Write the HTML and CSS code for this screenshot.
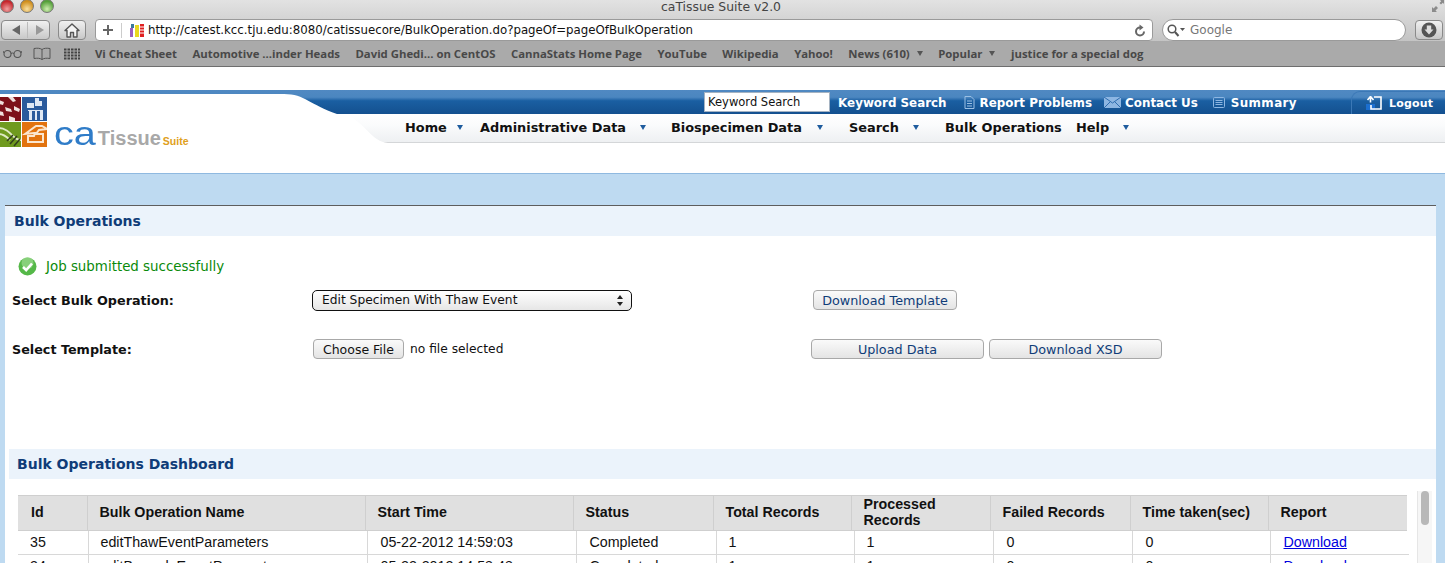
FILE: index.html
```html
<!DOCTYPE html>
<html lang="en">
<head>
<meta charset="utf-8"/>
<title>caTissue Suite v2.0</title>
<link rel="stylesheet" href="styles.css">
</head>
<body>
<div id="browser">
    <div id="titlebar">
        <div class="lights"><i class="light red"></i><i class="light amber"></i><i class="light green"></i></div>
        <div class="wintitle">caTissue Suite v2.0</div>
        <svg class="resize" width="12" height="12" viewBox="0 0 12 12"><path d="M0 12V7l1.500 1.500L4 6l2 2-2.500 2.500L5 12zM12 0v4l-1.200-1.200L9 4.500 7.500 3l1.700-1.800L8 0z" fill="#8b8b8b"/></svg>
    </div>
    <div id="toolbar">
        <div class="btn backfwd">
            <svg width="45" height="20" viewBox="0 0 45 20"><path d="M9 10l8-5v10z" fill="#666"/><path d="M33 5l8 5-8 5z" fill="#999"/><path d="M24.500 2v16" stroke="#bbb"/></svg>
        </div>
        <div class="btn home">
            <svg width="16" height="15" viewBox="0 0 16 15"><path d="M8 1L1 7.500h2V14h3.500V9.500h3V14H13V7.500h2z" fill="#f4f4f4" stroke="#555" stroke-width="1.400" stroke-linejoin="round"/></svg>
        </div>
        <div class="urlbar">
            <svg class="plus" width="12" height="12" viewBox="0 0 12 12"><path d="M6 1v10M1 6h10" stroke="#666" stroke-width="2"/></svg>
            <span class="sep"></span>
            <svg class="favicon" width="15" height="15" viewBox="0 0 15 15"><rect y="5" width="3" height="9" fill="#9a5fc0"/><rect x="1" y="1" width="3" height="4" fill="#3a7a9a"/><rect x="5" y="2" width="4" height="12" fill="#e8d820"/><rect x="10" y="1" width="4" height="13" fill="#e02020"/><path d="M10 4h4M10 7h4M10 10h4" stroke="#fff"/></svg>
            <span class="url">http://catest.kcc.tju.edu:8080/catissuecore/BulkOperation.do?pageOf=pageOfBulkOperation</span>
            <svg class="reload" width="12" height="13" viewBox="0 0 12 13"><path d="M10 7.500A4 4 0 1 1 6 3.500" fill="none" stroke="#666" stroke-width="2"/><path d="M5.500 0.500l4 3-4 3z" fill="#666"/></svg>
        </div>
        <div class="searchbar">
            <svg width="18" height="13" viewBox="0 0 18 13"><circle cx="5" cy="5" r="3.800" fill="none" stroke="#555" stroke-width="1.500"/><path d="M8 8l3.500 4" stroke="#555" stroke-width="2"/><path d="M13 4h5l-2.500 3z" fill="#555"/></svg>
            <span>Google</span>
        </div>
        <div class="btn dl">
            <svg width="16" height="16" viewBox="0 0 16 16"><circle cx="8" cy="8" r="7.500" fill="#555"/><path d="M5.800 3.500h4.400v4h2.300L8 12.500 3.500 7.500h2.300z" fill="#ddd"/></svg>
        </div>
    </div>
    <div id="bookmarks">
        <svg class="glasses" width="19" height="9" viewBox="0 0 19 9"><circle cx="4.500" cy="5" r="3.500" fill="none" stroke="#555" stroke-width="1.100"/><circle cx="14.500" cy="5" r="3.500" fill="none" stroke="#555" stroke-width="1.100"/><path d="M8 4.500q1.500-1 3 0M1 4L0 2M18 4l1-2" fill="none" stroke="#555"/></svg>
        <svg class="book" width="18" height="13" viewBox="0 0 18 13"><path d="M9 2.500C7 1 4 1 1 1.500v10c3-.5 6-.5 8 1 2-1.500 5-1.500 8-1v-10C14 1 11 1 9 2.500zM9 2.500v10" fill="none" stroke="#555"/></svg>
        <svg class="grid" width="16" height="12" viewBox="0 0 16 12"><path d="M0 1.500h16M0 4.500h16M0 7.500h16M0 10.500h16" stroke="#444" stroke-width="2" stroke-dasharray="2.500 1"/></svg>
        <a>Vi Cheat Sheet</a>
        <a>Automotive ...inder Heads</a>
        <a>David Ghedi... on CentOS</a>
        <a>CannaStats Home Page</a>
        <a>YouTube</a>
        <a>Wikipedia</a>
        <a>Yahoo!</a>
        <a>News (610)<i class="menuarrow"></i></a>
        <a>Popular<i class="menuarrow"></i></a>
        <a>justice for a special dog</a>
    </div>
</div>

<div id="gap"></div>

<div id="sitehead">
    <svg class="headcurve" width="400" height="54" viewBox="0 0 400 54">
        <path d="M0 4H284C305 4 310 15 337 24H346C365 33 372 52 388 53H0z" fill="#fff"/>
    </svg>
    <div class="logo">
        <svg width="48" height="50" viewBox="0 0 48 50">
            <rect width="22" height="24" fill="#7c1018"/>
            <path d="M0 3l5 2-1 3-4-1zM9 0h5l3 4-3 1zM6 10l6 2 1 3-6-1zM15 9l6 3-1 3-5-2zM0 14l4 1 1 4-5-1zM10 19l6 2v3h-6z" fill="#efe0dc"/>
            <rect x="23" width="25" height="24" fill="#2a5a9c"/>
            <path d="M28 6h7v5h-7zM36 1h4v3h3v5h-7zM29 13h15v1h-15zM30 14h3v9h-3zM36 14h2v9h-2zM41 14h3v9h-3z" fill="#dfe8f4"/>
            <rect y="25" width="22" height="25" fill="#6f9a1e"/>
            <path d="M0 31c6 0 10 4 14 8s6 4 8 4M0 37c5 0 8 3 11 6" fill="none" stroke="#dfeac4" stroke-width="1.800"/>
            <path d="M11 47l7-8M15 49l6-7M8 44l6-6" stroke="#33401c" stroke-width="1.600"/>
            <rect x="23" y="25" width="25" height="25" fill="#e2730f"/>
            <path d="M26 37l11-8 6 0 5 3-8 1-3 4h7v8H29v-6h6l1-3z" fill="none" stroke="#fbe6cf" stroke-width="2"/>
        </svg>
        <div class="logotext"><span class="lg-ca">ca</span><span class="lg-tissue">Tissue</span><span class="lg-suite">Suite</span></div>
    </div>
    <div class="headright">
        <div class="topbar">
            <div class="kwbox">Keyword Search</div>
            <a class="toplink kwlink">Keyword Search</a>
            <a class="toplink rplink">
                <svg width="11" height="13" viewBox="0 0 11 13"><path d="M1 .5h6l3 3v9H1zM3 5h5M3 7.500h5M3 10h5" fill="none" stroke="#9cc0e4"/></svg>
                Report Problems</a>
            <a class="toplink ctlink">
                <svg width="17" height="11" viewBox="0 0 17 11"><rect width="17" height="11" fill="#8db6e2"/><path d="M0 0l8.500 6L17 0M0 11l6-6M17 11l-6-6" fill="none" stroke="#2e6cae"/></svg>
                Contact Us</a>
            <a class="toplink smlink">
                <svg width="12" height="11" viewBox="0 0 12 11"><path d="M1.500.5h9a1 1 0 0 1 1 1v8a1 1 0 0 1-1 1h-9a1 1 0 0 1-1-1v-8a1 1 0 0 1 1-1zM2.500 3.500h7M2.500 5.500h7M2.500 7.500h7" fill="none" stroke="#8db6e2"/></svg>
                Summary</a>
            <a class="logout">
                <svg width="16" height="14" viewBox="0 0 16 14"><rect y="8" width="9" height="6" fill="#1c6fd0"/><path d="M8 1h7v12H5V9" fill="none" stroke="#fff" stroke-width="1.600"/><path d="M4.500 1v5.500M1.500 4l3-3.500 3 3.500" fill="none" stroke="#fff" stroke-width="1.600"/></svg>
                Logout</a>
        </div>
        <div class="navbar">
            <a class="nav nav-home">Home<i class="navarrow"></i></a>
            <a class="nav nav-admin">Administrative Data<i class="navarrow"></i></a>
            <a class="nav nav-bio">Biospecimen Data<i class="navarrow"></i></a>
            <a class="nav nav-search">Search<i class="navarrow"></i></a>
            <a class="nav nav-bulk">Bulk Operations</a>
            <a class="nav">Help<i class="navarrow"></i></a>
        </div>
    </div>
</div>

<div id="gap2"></div>

<div id="content">
    <div id="panel">
        <div class="paneltitle">Bulk Operations</div>
        <div class="message">
            <svg width="19" height="19" viewBox="0 0 19 19">
                <circle cx="9.500" cy="9.500" r="9" fill="#55b848"/>
                <circle cx="9.500" cy="6" r="6" fill="#a8e09c" opacity=".6"/>
                <path d="M5 10l3.200 3.200L14 6.500" fill="none" stroke="#fff" stroke-width="2.600"/>
            </svg>
            <span>Job submitted successfully</span>
        </div>
        <div class="formrow row1">
            <label>Select Bulk Operation:</label>
            <div class="selectbox"><span>Edit Specimen With Thaw Event</span>
                <svg width="6" height="11" viewBox="0 0 6 11"><path d="M3 0l3 4H0zM3 11L0 7h6z" fill="#222"/></svg>
            </div>
            <button class="act dltpl">Download Template</button>
        </div>
        <div class="formrow row2">
            <label>Select Template:</label>
            <div class="filepick"><button class="choose">Choose File</button><span>no file selected</span></div>
            <button class="act wide">Upload Data</button>
            <button class="act wide">Download XSD</button>
        </div>
        <div class="panelgap"></div>
        <div class="paneltitle dash">Bulk Operations Dashboard</div>
        <div class="tablewrap">
            <div class="tables">
                <table class="thead">
                    <tr>
                        <th class="c1">Id</th><th class="c2">Bulk Operation Name</th><th class="c3">Start Time</th><th class="c4">Status</th><th class="c5">Total Records</th><th class="c6">Processed Records</th><th class="c7">Failed Records</th><th class="c8">Time taken(sec)</th><th class="c9">Report</th>
                    </tr>
                </table>
                <table class="tbody">
                    <tr>
                        <td class="d1">35</td><td class="d2">editThawEventParameters</td><td class="d3">05-22-2012 14:59:03</td><td class="d4">Completed</td><td class="d5">1</td><td class="d6">1</td><td class="d7">0</td><td class="d8">0</td><td class="d9"><a href="#">Download</a></td>
                    </tr>
                    <tr>
                        <td class="d1">34</td><td class="d2">editBarcodeEventParameters</td><td class="d3">05-22-2012 14:58:48</td><td class="d4">Completed</td><td class="d5">1</td><td class="d6">1</td><td class="d7">0</td><td class="d8">0</td><td class="d9"><a href="#">Download</a></td>
                    </tr>
                </table>
            </div>
            <div class="scrolltrack"><div class="scrollthumb"></div></div>
        </div>
    </div>
</div>
</body>
</html>
```

FILE: styles.css
```css
html, body {
    margin:0;
    padding:0;
    height:563px;
    overflow:hidden;
    background:#fff;
}
body {
    font-family:"DejaVu Sans", sans-serif;
    font-size:12px;
}
a {
    text-decoration:none;
}

/* browser window */
#browser {
    height:67px;
    border-bottom:1px solid #6e6e6e;
    box-sizing:border-box;
}
#titlebar {
    display:flex;
    align-items:center;
    height:19px;
    box-sizing:border-box;
    padding-bottom:7px;
    background:linear-gradient(#e2e2e2, #d4d4d4);
}
.lights {
    display:flex;
    gap:6px;
}
.light {
    display:block;
    width:12px;
    height:12px;
    border-radius:50%;
    border:1px solid #777;
}
.light.red { background:radial-gradient(circle at 50% 75%, #f0a0a0, #c5262c 70%); }
.light.amber { background:radial-gradient(circle at 50% 75%, #f9e0a0, #d08f1e 70%); }
.light.green { background:radial-gradient(circle at 50% 75%, #cfeeb0, #55a03a 70%); }
.wintitle {
    flex:1;
    text-align:center;
    font-size:12.400px;
    color:#444;
    padding-right:44px;
}
.resize {
    margin-right:1px;
}
#toolbar {
    display:flex;
    align-items:center;
    height:22px;
    padding-left:1px;
    background:linear-gradient(#d4d4d4, #c4c4c4);
}
.btn {
    display:flex;
    align-items:center;
    justify-content:center;
    height:20px;
    box-sizing:border-box;
    border:1px solid #8a8a8a;
    border-radius:4px;
    background:linear-gradient(#f0f0f0, #c8c8c8);
}
.backfwd { width:49px; }
.home { width:28px; margin-left:8px; }
.dl { width:28px; margin-left:9px; }
.urlbar {
    display:flex;
    align-items:center;
    width:1058px;
    height:22px;
    margin-left:9px;
    box-sizing:border-box;
    border:1px solid #9a9a9a;
    border-radius:4px;
    background:#fff;
}
.plus { margin-left:6px; }
.sep {
    width:1px;
    height:15px;
    margin:0 8px 0 7px;
    background:#ccc;
}
.favicon { margin-right:3px; }
.url {
    flex:1;
    font-size:11.770px;
    color:#111;
    white-space:nowrap;
}
.reload { margin-right:6px; }
.searchbar {
    display:flex;
    align-items:center;
    width:244px;
    height:22px;
    margin-left:9px;
    padding-left:4px;
    box-sizing:border-box;
    border:1px solid #9a9a9a;
    border-radius:11px;
    background:#fff;
    color:#777;
    font-size:12px;
}
.searchbar span { margin-left:5px; }
#bookmarks {
    display:flex;
    align-items:center;
    height:25px;
    background:#aaa;
    font-size:11.350px;
    font-weight:bold;
    font-family:"Open Sans", "DejaVu Sans", sans-serif;
    color:#484848;
    white-space:nowrap;
}
#bookmarks a {
    margin-right:15.500px;
}
.glasses { margin-left:3px; }
.book { margin-left:11px; }
.grid { margin-left:13px; margin-right:15px; }
.menuarrow {
    display:inline-block;
    margin-left:7px;
    vertical-align:2px;
    border:3.500px solid transparent;
    border-top:5px solid #555;
    border-bottom:0;
}
#gap {
    height:23px;
}

/* site header */
#sitehead {
    display:flex;
    position:relative;
    height:54px;
    background:#fff;
}
.headcurve {
    position:absolute;
    left:0;
    top:0;
    z-index:1;
}
.logo {
    display:flex;
    align-items:flex-end;
    position:relative;
    z-index:2;
    width:348px;
    flex:none;
    margin-left:-1px;
    height:54px;
    box-sizing:border-box;
}
.logo svg {
    flex:none;
    margin-bottom:-3px;
    filter:blur(.4px);
}
.logotext {
    display:flex;
    align-items:baseline;
    margin-left:7px;
    margin-bottom:-6px;
    font-family:"Liberation Sans", sans-serif;
    white-space:nowrap;
}
.lg-ca {
    display:inline-block;
    margin-right:7px;
    font-size:33px;
    line-height:30px;
    color:#2f7cc8;
    transform:scaleX(1.2);
    transform-origin:left;
}
.lg-tissue {
    margin-left:2px;
    font-size:20px;
    font-weight:bold;
    color:#a8a8a8;
}
.lg-suite {
    margin-left:2px;
    font-size:10.500px;
    font-weight:bold;
    color:#e0a020;
}
.headright {
    flex:1;
    display:flex;
    flex-direction:column;
    margin-left:-347px;
}
.topbar {
    display:flex;
    align-items:center;
    justify-content:flex-end;
    height:24px;
    padding-top:1px;
    box-sizing:border-box;
    background:linear-gradient(#5089c2 0, #4b86c0 30%, #1a5fa2 45%, #14508f 100%);
    font-weight:bold;
    font-size:11.900px;
    color:#fff;
    white-space:nowrap;
}
.kwbox {
    width:126px;
    height:20px;
    margin-right:8px;
    margin-top:-1px;
    padding-left:3px;
    box-sizing:border-box;
    border:1px solid #a5b3c2;
    background:#fff;
    color:#111;
    font-weight:normal;
    font-size:11.500px;
    line-height:18px;
}
.toplink {
    display:flex;
    align-items:center;
    gap:5px;
    color:#fff;
}
.kwlink { margin-right:17px; }
.rplink { margin-right:12px; }
.ctlink { margin-right:15px; gap:4px; }
.smlink { margin-right:54px; gap:6px; letter-spacing:.4px; }
.logout {
    display:flex;
    align-items:center;
    gap:7px;
    width:94px;
    height:23px;
    padding-left:14px;
    box-sizing:border-box;
    align-self:flex-end;
    border:1px solid #3b78b6;
    border-bottom:0;
    border-right:0;
    border-radius:9px 0 0 0;
    color:#fff;
    font-size:11px;
    letter-spacing:.2px;
}
.navbar {
    display:flex;
    align-items:center;
    height:29px;
    box-sizing:border-box;
    padding:0 0 2px 405px;
    border-bottom:1px solid #d4d6d8;
    background:linear-gradient(#fff 0, #fafbfc 40%, #eef0f2 100%);
    font-weight:bold;
    font-size:12.900px;
    color:#111;
    white-space:nowrap;
}
.nav { color:#111; }
.navarrow {
    display:inline-block;
    margin-left:8px;
    vertical-align:2px;
    border:3.500px solid transparent;
    border-top:5px solid #1f5c9e;
    border-bottom:0;
}
.nav-home { width:75px; }
.nav-admin { width:191px; }
.nav-bio { width:178px; }
.nav-search { width:96px; }
.nav-bulk { width:131px; }
.nav-admin .navarrow { margin-left:14px; }
.nav-bio .navarrow { margin-left:15px; }
.nav-search .navarrow { margin-left:14px; }
.nav-home .navarrow { margin-left:10px; }
.nav:last-child .navarrow { margin-left:14px; }
#gap2 {
    height:29px;
}

/* page body */
#content {
    height:390px;
    box-sizing:border-box;
    padding:31px 9px 0 5px;
    border-top:1px solid #8fb9e0;
    background:#bedaf1;
}
#panel {
    height:400px;
    border-top:1px solid #5d5d5d;
    background:#fff;
}
.paneltitle {
    height:30px;
    padding-left:9px;
    background:#ebf3fb;
    color:#0f3c78;
    font-weight:bold;
    font-size:14px;
    line-height:30px;
}
.message {
    display:flex;
    align-items:center;
    gap:9px;
    margin:21px 0 0 13px;
    height:19px;
    color:#0a8a0a;
    font-size:13.400px;
}
.formrow {
    display:flex;
    align-items:center;
    padding-left:7px;
}
.formrow label {
    width:300px;
    flex:none;
    font-weight:bold;
    font-size:12.750px;
    color:#111;
}
.row1 {
    margin-top:13px;
    height:22px;
}
.row2 {
    margin-top:27px;
    height:22px;
}
.selectbox {
    display:flex;
    align-items:center;
    justify-content:space-between;
    width:320px;
    height:21px;
    flex:none;
    box-sizing:border-box;
    padding:0 8px 0 9px;
    border:1px solid #111;
    border-radius:5px;
    background:linear-gradient(#fff, #e6e6e6);
    font-size:12.250px;
    color:#111;
}
.act {
    height:20px;
    box-sizing:border-box;
    padding:0;
    border:1px solid #a8a8a8;
    border-radius:4px;
    background:linear-gradient(#fafafa, #e4e4e4);
    color:#0f3c78;
    font-family:"DejaVu Sans", sans-serif;
    font-size:12.750px;
}
.dltpl {
    width:144px;
    margin-left:181px;
}
.filepick {
    display:flex;
    align-items:center;
    gap:6px;
    width:499px;
    flex:none;
    font-size:12.250px;
    color:#111;
}
.choose {
    width:91px;
    height:20px;
    margin-left:1px;
    box-sizing:border-box;
    padding:0;
    border:1px solid #a8a8a8;
    border-radius:4px;
    background:linear-gradient(#fafafa, #e4e4e4);
    color:#111;
    font-family:"DejaVu Sans", sans-serif;
    font-size:12.500px;
}
.wide {
    width:173px;
    margin-right:5px;
}
.panelgap {
    height:89px;
}
.dash {
    margin-left:4px;
    padding-left:8px;
}

/* dashboard table */
.tablewrap {
    display:flex;
    margin:16px 0 0 13px;
}
.tables {
    width:1391px;
    flex:none;
    font-family:"Liberation Sans", sans-serif;
}
table {
    border-collapse:collapse;
    table-layout:fixed;
    font-size:14.250px;
}
.thead {
    width:1389px;
}
.thead th {
    height:35px;
    padding:0 0 2px 12px;
    box-sizing:border-box;
    background:#e0e0e0;
    border:1px solid #cfcfcf;
    text-align:left;
    font-weight:bold;
    color:#111;
    line-height:16px;
}
.thead th.c1 { padding-left:13px; }
.c1 { width:69px; }
.c2 { width:278px; }
.c3 { width:208px; }
.c4 { width:140px; }
.c5 { width:138px; }
.c6 { width:139px; }
.c7 { width:140px; }
.c8 { width:138px; }
.c9 { width:139px; }
.tbody {
    width:1391px;
}
.tbody td {
    height:23px;
    padding:0 0 0 13px;
    box-sizing:border-box;
    border:1px solid #d8d8d8;
    border-top:0;
    color:#111;
    white-space:nowrap;
}
.tbody td.d1,
.tbody td.d2,
.tbody td.d5,
.tbody td.d6 {
    padding-left:12px;
}
.tbody tr td:first-child,
.thead th:first-child {
    border-left:0;
}
.tbody tr td:last-child,
.thead th:last-child {
    border-right:0;
}
.d1 { width:70px; }
.d2 { width:279px; }
.d3 { width:209px; }
.d4 { width:140px; }
.d5 { width:138px; }
.d6 { width:139px; }
.d7 { width:139px; }
.d8 { width:138px; }
.d9 { width:139px; }
.tbody a {
    color:#0000e0;
    text-decoration:underline;
}
.scrolltrack {
    width:15px;
    height:100px;
    margin-left:8px;
    margin-top:-4px;
    background:#f6f6f6;
    border-left:1px solid #e6e6e6;
    box-sizing:border-box;
    padding:0 3px;
}
.scrollthumb {
    width:8px;
    height:34px;
    border-radius:4px;
    background:#b8b8b8;
}
```
